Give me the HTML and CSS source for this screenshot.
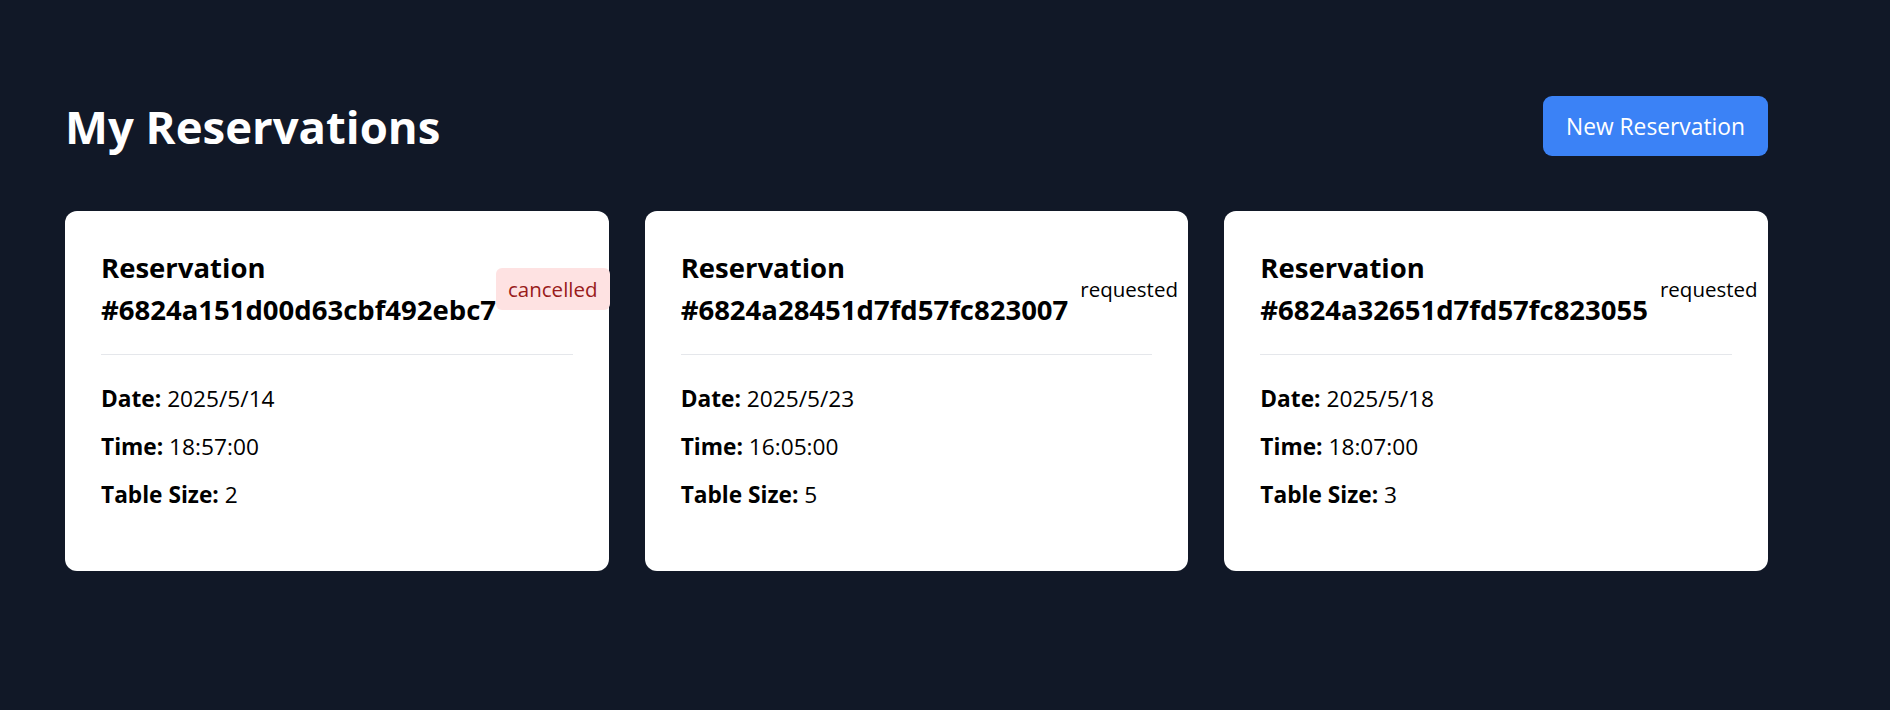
FILE: index.html
```html
<!DOCTYPE html>
<html lang="en">
<head>
<meta charset="utf-8">
<title>My Reservations</title>
<link rel="stylesheet" href="styles.css">
</head>
<body>
<main class="page">
  <header class="page-header">
    <h1 class="page-title">My Reservations</h1>
    <button class="btn-primary">New Reservation</button>
  </header>
  <section class="grid">
    <article class="card">
      <div class="card-head">
        <h3 class="card-title">Reservation #6824a151d00d63cbf492ebc7</h3>
        <span class="badge badge-cancelled">cancelled</span>
      </div>
      <div class="card-body">
        <p class="row"><strong>Date:</strong> 2025/5/14</p>
        <p class="row"><strong>Time:</strong> 18:57:00</p>
        <p class="row"><strong>Table Size:</strong> 2</p>
      </div>
    </article>
    <article class="card">
      <div class="card-head">
        <h3 class="card-title">Reservation #6824a28451d7fd57fc823007</h3>
        <span class="badge">requested</span>
      </div>
      <div class="card-body">
        <p class="row"><strong>Date:</strong> 2025/5/23</p>
        <p class="row"><strong>Time:</strong> 16:05:00</p>
        <p class="row"><strong>Table Size:</strong> 5</p>
      </div>
    </article>
    <article class="card">
      <div class="card-head">
        <h3 class="card-title">Reservation #6824a32651d7fd57fc823055</h3>
        <span class="badge">requested</span>
      </div>
      <div class="card-body">
        <p class="row"><strong>Date:</strong> 2025/5/18</p>
        <p class="row"><strong>Time:</strong> 18:07:00</p>
        <p class="row"><strong>Table Size:</strong> 3</p>
      </div>
    </article>
  </section>
</main>
</body>
</html>
```
FILE: styles.css
```css
* { box-sizing: border-box; }
html, body { margin: 0; padding: 0; }
body {
  background: #111827;
  font-family: "Open Sans", "Noto Sans", sans-serif;
  color: #000;
  min-height: 710px;
}
.page {
  width: 1768px;
  padding: 96px 0 0 65px;
}
.page-header {
  display: flex;
  justify-content: space-between;
  align-items: center;
  height: 60px;
  margin-bottom: 55px;
}
.page-title {
  margin: 0;
  color: #fff;
  font-size: 45.5px;
  font-weight: 700;
  line-height: 54px;
}
.btn-primary {
  width: 225px;
  height: 60px;
  border: 0;
  border-radius: 9px;
  background: #3b82f6;
  color: #fff;
  font-family: inherit;
  font-size: 22.8px;
}
.grid {
  display: grid;
  grid-template-columns: repeat(3, minmax(0, 1fr));
  gap: 36px;
}
.card {
  background: #fff;
  border-radius: 12px;
  padding: 36px 36px 60px;
  height: 360px;
}
.card-head {
  display: flex;
  justify-content: space-between;
  align-items: center;
  padding-bottom: 23px;
  border-bottom: 1px solid #e5e7eb;
  margin-bottom: 26px;
}
.card-title {
  margin: 0;
  font-size: 27.5px;
  line-height: 42px;
  font-weight: 700;
}
.badge {
  padding: 6px 12px;
  border-radius: 6px;
  font-size: 20.5px;
  line-height: 30px;
}
.badge-cancelled {
  background: #fee2e2;
  color: #991b1b;
}
.card-body { display: flex; flex-direction: column; gap: 12px; }
.row { margin: 0; font-size: 22.7px; line-height: 36px; }
```
